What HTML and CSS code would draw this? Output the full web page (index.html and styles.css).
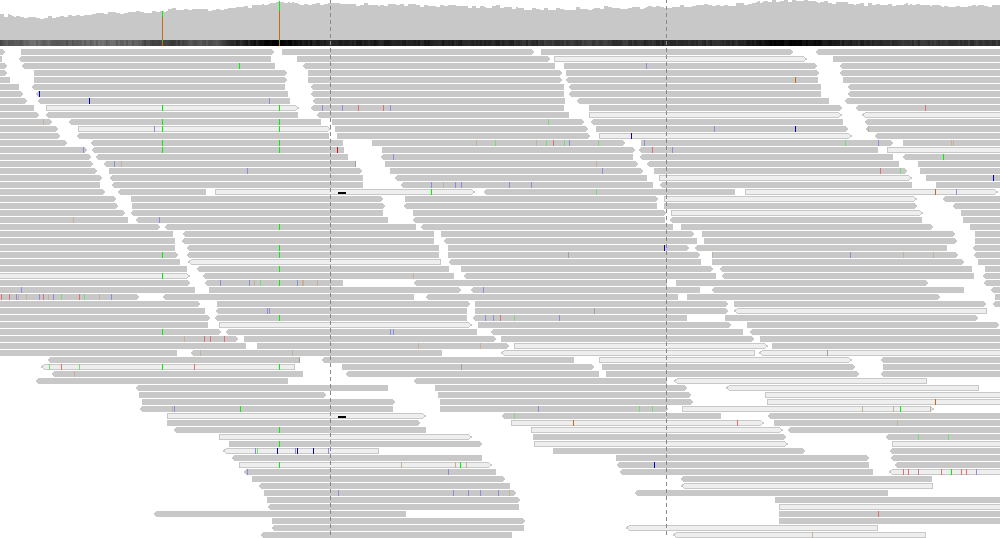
FILE: index.html

```html
<!DOCTYPE html>
<html lang="en">
<head>
    <meta charset="UTF-8">
    <title>Alignment Viewer</title>
    <link rel="stylesheet" href="styles.css">
</head>
<body>
    <div class="viewer">
        <svg id="coverage" class="track coverage" width="1000" height="49"></svg>
        <svg id="reads" class="track reads" width="1000" height="489"></svg>
        <div class="guide guide-left"></div>
        <div class="guide guide-right"></div>
    </div>
    <script src="pileup.js"></script>
</body>
</html>
```

FILE: styles.css

```css
body {
    margin: 0;
    background-color: white;
}

.viewer {
    position: relative;
    width: 1000px;
    height: 538px;
    overflow: hidden;
}

.track {
    display: block;
    shape-rendering: crispEdges;
}

.depth {
    fill: #c8c8c8;
}

.read {
    fill: #c8c8c8;
}

.read-light {
    fill: #eeeeee;
    stroke: #c8c8c8;
    stroke-width: 1;
}

.base-g { fill: #00f000; }
.base-G { fill: #70e070; }
.base-b { fill: #0000c8; }
.base-B { fill: #8c8cdc; }
.base-r { fill: #d01010; }
.base-R { fill: #e07070; }
.base-t { fill: #c8b098; }
.base-o { fill: #c86a10; }
.base-k { fill: #a0a0a0; }
.base-d { fill: #000000; }

.guide {
    position: absolute;
    top: -1px;
    width: 1px;
    height: 539px;
    background-image: repeating-linear-gradient(to bottom, #888888 0, #888888 4px, transparent 4px, transparent 7px);
}

.guide-left {
    left: 330px;
}

.guide-right {
    left: 666px;
}
```

FILE: pileup.js

```js
const SVG_NS = "http://www.w3.org/2000/svg";

// one string per row: 21-274> read with arrow, <21-274 reverse read, * = pale read, 239g = mismatch
const ROWS = [
    "0-5> 21-274> 282-534> 541-793> <815-1000",
    "0-2 <18-271 297-550> 554-807>* 833-1000",
    "0-7> <21-275 239g <302-555 564-817> 646B <839-1000",
    "0-7> 34-287> 308-562> 566-819> <839-1000",
    "0-10 34-287> 308-562> <565-818 795o 843-1000",
    "0-19 <31-285 <310-564 <568-821 <847-1000",
    "0-23> <35-288 39b <310-564 <568-821 <847-1000",
    "0-27> <37-290 89b 269B <312-565 <576-829 <844-1000",
    "0-34 46-299>* 162g 279g <310-564 322B 342B 358R 383R 390B 589-842> <855-1000 925R",
    "0-39> <45-298 <316-569 589-842>* <862-1000*",
    "0-52> 43t <68-321 162g 279g 332-584> 548G <590-843 <864-1000",
    "0-58> 78-331>* 154B 162g 279g 335-588> 596-848> 714B 795b <865-1000 868t",
    "0-60> <76-329 337-590> 599-852>* 631b <874-1000",
    "0-67> <90-343 162g 279g 372-625> 476t 495G 536t 546G 553R 564G 569B 598G 641-893> 644B 845G 878B 903-1000 951t 953t",
    "0-87> 83B <91-344 162g 279g 337r 382-635> <638-878 652R 672B 887-1000*",
    "0-91> <95-348 <380-633 393B <639-893 <902-1000 943g",
    "0-93> <103-355 114B 121t 355k 385-638> 596t <646-899 918-1000",
    "0-97> 109-362> 247B 390-643> 602B 654-907> 880R 900G 920-1000",
    "0-102> <109-363 <394-647 659-912>* 926-1000 993b",
    "0-100 <111-363 <400-653 431B 443t 455B 461B 509B 531B <659-912 936-1000",
    "0-105> <117-206 215-475>* 431g <483-735 596G 745-998>* 935o 956B",
    "0-116> 131-383> 405-658> 664-917>* <942-1000",
    "0-118> 132-385> <403-657 664-917> <952-1000",
    "0-125> <130-383 413-666> 671-923>* 961-1000",
    "0-128 73t <135-388 159B <412-665 <669-922 963-1000",
    "0-160> <164-416 279g <420-673 681-933> 970-1000",
    "0-173 <182-434 441-694> 702-955> 975-1000",
    "0-175 <181-434 <443-697 704-957> 975-1000",
    "0-175 <186-439 279g 448-689> 664b <694-947 <972-1000",
    "0-178> 162g <186-439 279g 448-700> 568k 712-958> 712t 850B 903t 933t <973-1000",
    "0-180 <188-441* <448-701 712-964> 978-1000",
    "0-187 <196-449 279g 461-713> <719-972 985-1000",
    "0-190>* 162g <202-454 413t <463-716 <721-974 <982-1000",
    "0-190> <204-343 220B 249B 254t 260G 279g 297B 302t 303t 317t <413-667 676-928> <983-1000",
    "0-195 21B 209-461> <470-700 483B <711-964 <990-1000",
    "0-139> 1R 9R 16B 18t 26t 39B 43R 48t 53B 61G 79R 84G 99t 111B <162-414 <425-678 687-940> 995-1000",
    "0-200> 217-470> 475-728> 734-986> <992-1000",
    "0-205 <215-467 267B 269B 475-728> 594k <734-987*",
    "0-210> <214-467 279g <472-687 485B 493B 500R 514G 559B 725-978>",
    "0-208 219-472>* 478-731> 747-999>",
    "0-221> 162g <225-477 390B 393B <490-743 <749-1000",
    "0-238> 184t 204R 210R 224R 244-496> 501-754> 760-1000",
    "0-246 257-509> 418t 480t 514-768>* 772-1000",
    "0-177 <190-442 200t 292t <501-755* <759-1000* 827k",
    "<47-299 299k <321-574 599-852>* <880-1000",
    "<41-295* 49G 61R 79G 162g 194R 279g 342-594> 461k 602-855> 883-1000",
    "<51-303 74t <345-599 606-859> <880-1000",
    "<35-288 <413-667 <674-927*",
    "<135-388 435-687> <726-979*",
    "139-326> 438-691> 765-1000*",
    "142-395> 440-693> 767-1000* 935o",
    "<139-393 172t 174B 240g 440-668> 538B 639G 652G 682-934>* 862t 893t 900g 930t",
    "167-426>* <501-721 514G <767-1000",
    "167-420> 511-764>* 573o 737R 774-1000 897t",
    "<173-426 279g 531-783>* <787-1000",
    "219-472>* 533-786> <885-1000 918G 948G",
    "229-482> 279g 534-788>* 892-1000*",
    "<223-379* 255B 257G 277b 295B 297b 313b 328B 553-805> <889-1000",
    "<231-482 616-869> <890-1000",
    "239-492>* 279g 401t 455t 460g 466t <616-869 654b <894-1000",
    "<243-496 247B 448B <619-873 <889-1000* 903R 908R 918R 941R 951g 961R 966R 976B",
    "252-505> <680-932",
    "<258-510 <681-933*",
    "264-516> 338B 453B 468B 480B 498B 509t <634-888",
    "267-520> 775-1000",
    "<267-519 779-1000*",
    "<153-406 779-1000 878R",
    "272-525> 779-1000",
    "<271-524 <626-878*",
    "<260-512 <673-926* 812t"
];

// top of the coverage bars, sampled along x
const DEPTH_TOP = [
    [0, 15], [30, 18], [45, 17], [80, 15], [120, 13], [160, 11], [170, 9], [200, 10], [230, 9], [260, 6],
    [279, 2], [300, 5], [330, 4], [400, 5], [500, 7], [530, 9], [560, 9], [600, 8], [670, 7], [700, 5],
    [730, 5], [775, 1], [810, 1], [860, 4], [900, 5], [920, 4], [950, 7], [1000, 5]
];

// grey level of the quality strip along x
const STRIP_SHADE = [
    [0, 78], [33, 105], [66, 92], [100, 105], [133, 95], [150, 68], [173, 58], [187, 80], [217, 82],
    [228, 45], [253, 26], [270, 4], [277, 2], [295, 16], [330, 32], [400, 30], [500, 36], [540, 52],
    [600, 58], [660, 42], [730, 44], [775, 4], [800, 6], [830, 30], [900, 50], [1000, 54]
];

function lerp(table, x) {
    for (let i = 1; i < table.length; i++) {
        if (x <= table[i][0]) {
            const a = table[i - 1];
            const b = table[i];
            return a[1] + (b[1] - a[1]) * (x - a[0]) / (b[0] - a[0]);
        }
    }
    return table[table.length - 1][1];
}

function noise(n) {
    const v = Math.sin(n * 12.9898) * 43758.5453;
    return v - Math.floor(v);
}

function add(parent, name, attrs, cls) {
    const el = document.createElementNS(SVG_NS, name);
    for (const key in attrs) {
        el.setAttribute(key, attrs[key]);
    }
    if (cls) {
        el.setAttribute("class", cls);
    }
    parent.appendChild(el);
    return el;
}

function drawCoverage() {
    const svg = document.getElementById("coverage");
    for (let x = 0; x < 1000; x += 2) {
        const top = Math.max(0, Math.round(lerp(DEPTH_TOP, x) + noise(Math.floor(x / 4)) * 3 - 1.5));
        add(svg, "rect", { x: x, y: top, width: 2, height: 40 - top }, "depth");
        const grey = Math.max(0, Math.round(lerp(STRIP_SHADE, x) + (noise(x + 7) - 0.5) * 22));
        add(svg, "rect", { x: x, y: 40, width: 2, height: 6, fill: `rgb(${grey},${grey},${grey})` });
    }
    // variant columns
    add(svg, "rect", { x: 162, y: 11, width: 1, height: 6 }, "base-g");
    add(svg, "rect", { x: 162, y: 17, width: 1, height: 29 }, "base-o");
    add(svg, "rect", { x: 162, y: 40, width: 1, height: 1 }, "base-g");
    add(svg, "rect", { x: 279, y: 1, width: 1, height: 10 }, "base-g");
    add(svg, "rect", { x: 279, y: 11, width: 1, height: 35 }, "base-o");
    add(svg, "rect", { x: 279, y: 40, width: 1, height: 1 }, "base-g");
}

function drawRead(svg, token, y) {
    const m = token.match(/^(<?)(\d+)-(\d+)(>?)(\*?)$/);
    // reads that touch the window edge carry on past it
    const x1 = Number(m[2]) === 0 ? -3 : Number(m[2]);
    const x2 = Number(m[3]) === 1000 ? 1003 : Number(m[3]);
    const light = m[5] === "*";
    const inset = light ? 0.5 : 0;
    const top = y + inset;
    const bottom = y + 6 - inset;
    const left = x1 + inset;
    const right = x2 - inset;
    let points;
    if (m[1]) {
        points = [[left, y + 3], [left + 3, top], [right, top], [right, bottom], [left + 3, bottom]];
    } else if (m[4]) {
        points = [[left, top], [right - 3, top], [right, y + 3], [right - 3, bottom], [left, bottom]];
    } else {
        points = [[left, top], [right, top], [right, bottom], [left, bottom]];
    }
    add(svg, "polygon", { points: points.map(p => p.join(",")).join(" ") }, light ? "read-light" : "read");
}

function drawReads() {
    const svg = document.getElementById("reads");
    ROWS.forEach((row, i) => {
        const y = i * 7;
        const tokens = row.split(" ");
        tokens.filter(t => t.includes("-")).forEach(t => drawRead(svg, t, y));
        tokens.filter(t => !t.includes("-")).forEach(t => {
            add(svg, "rect", { x: parseInt(t), y: y, width: 1, height: 6 }, "base-" + t.slice(-1));
        });
    });
    // deletions
    add(svg, "rect", { x: 338, y: 143, width: 8, height: 2 }, "base-d");
    add(svg, "rect", { x: 338, y: 367, width: 8, height: 2 }, "base-d");
}

drawCoverage();
drawReads();
```
